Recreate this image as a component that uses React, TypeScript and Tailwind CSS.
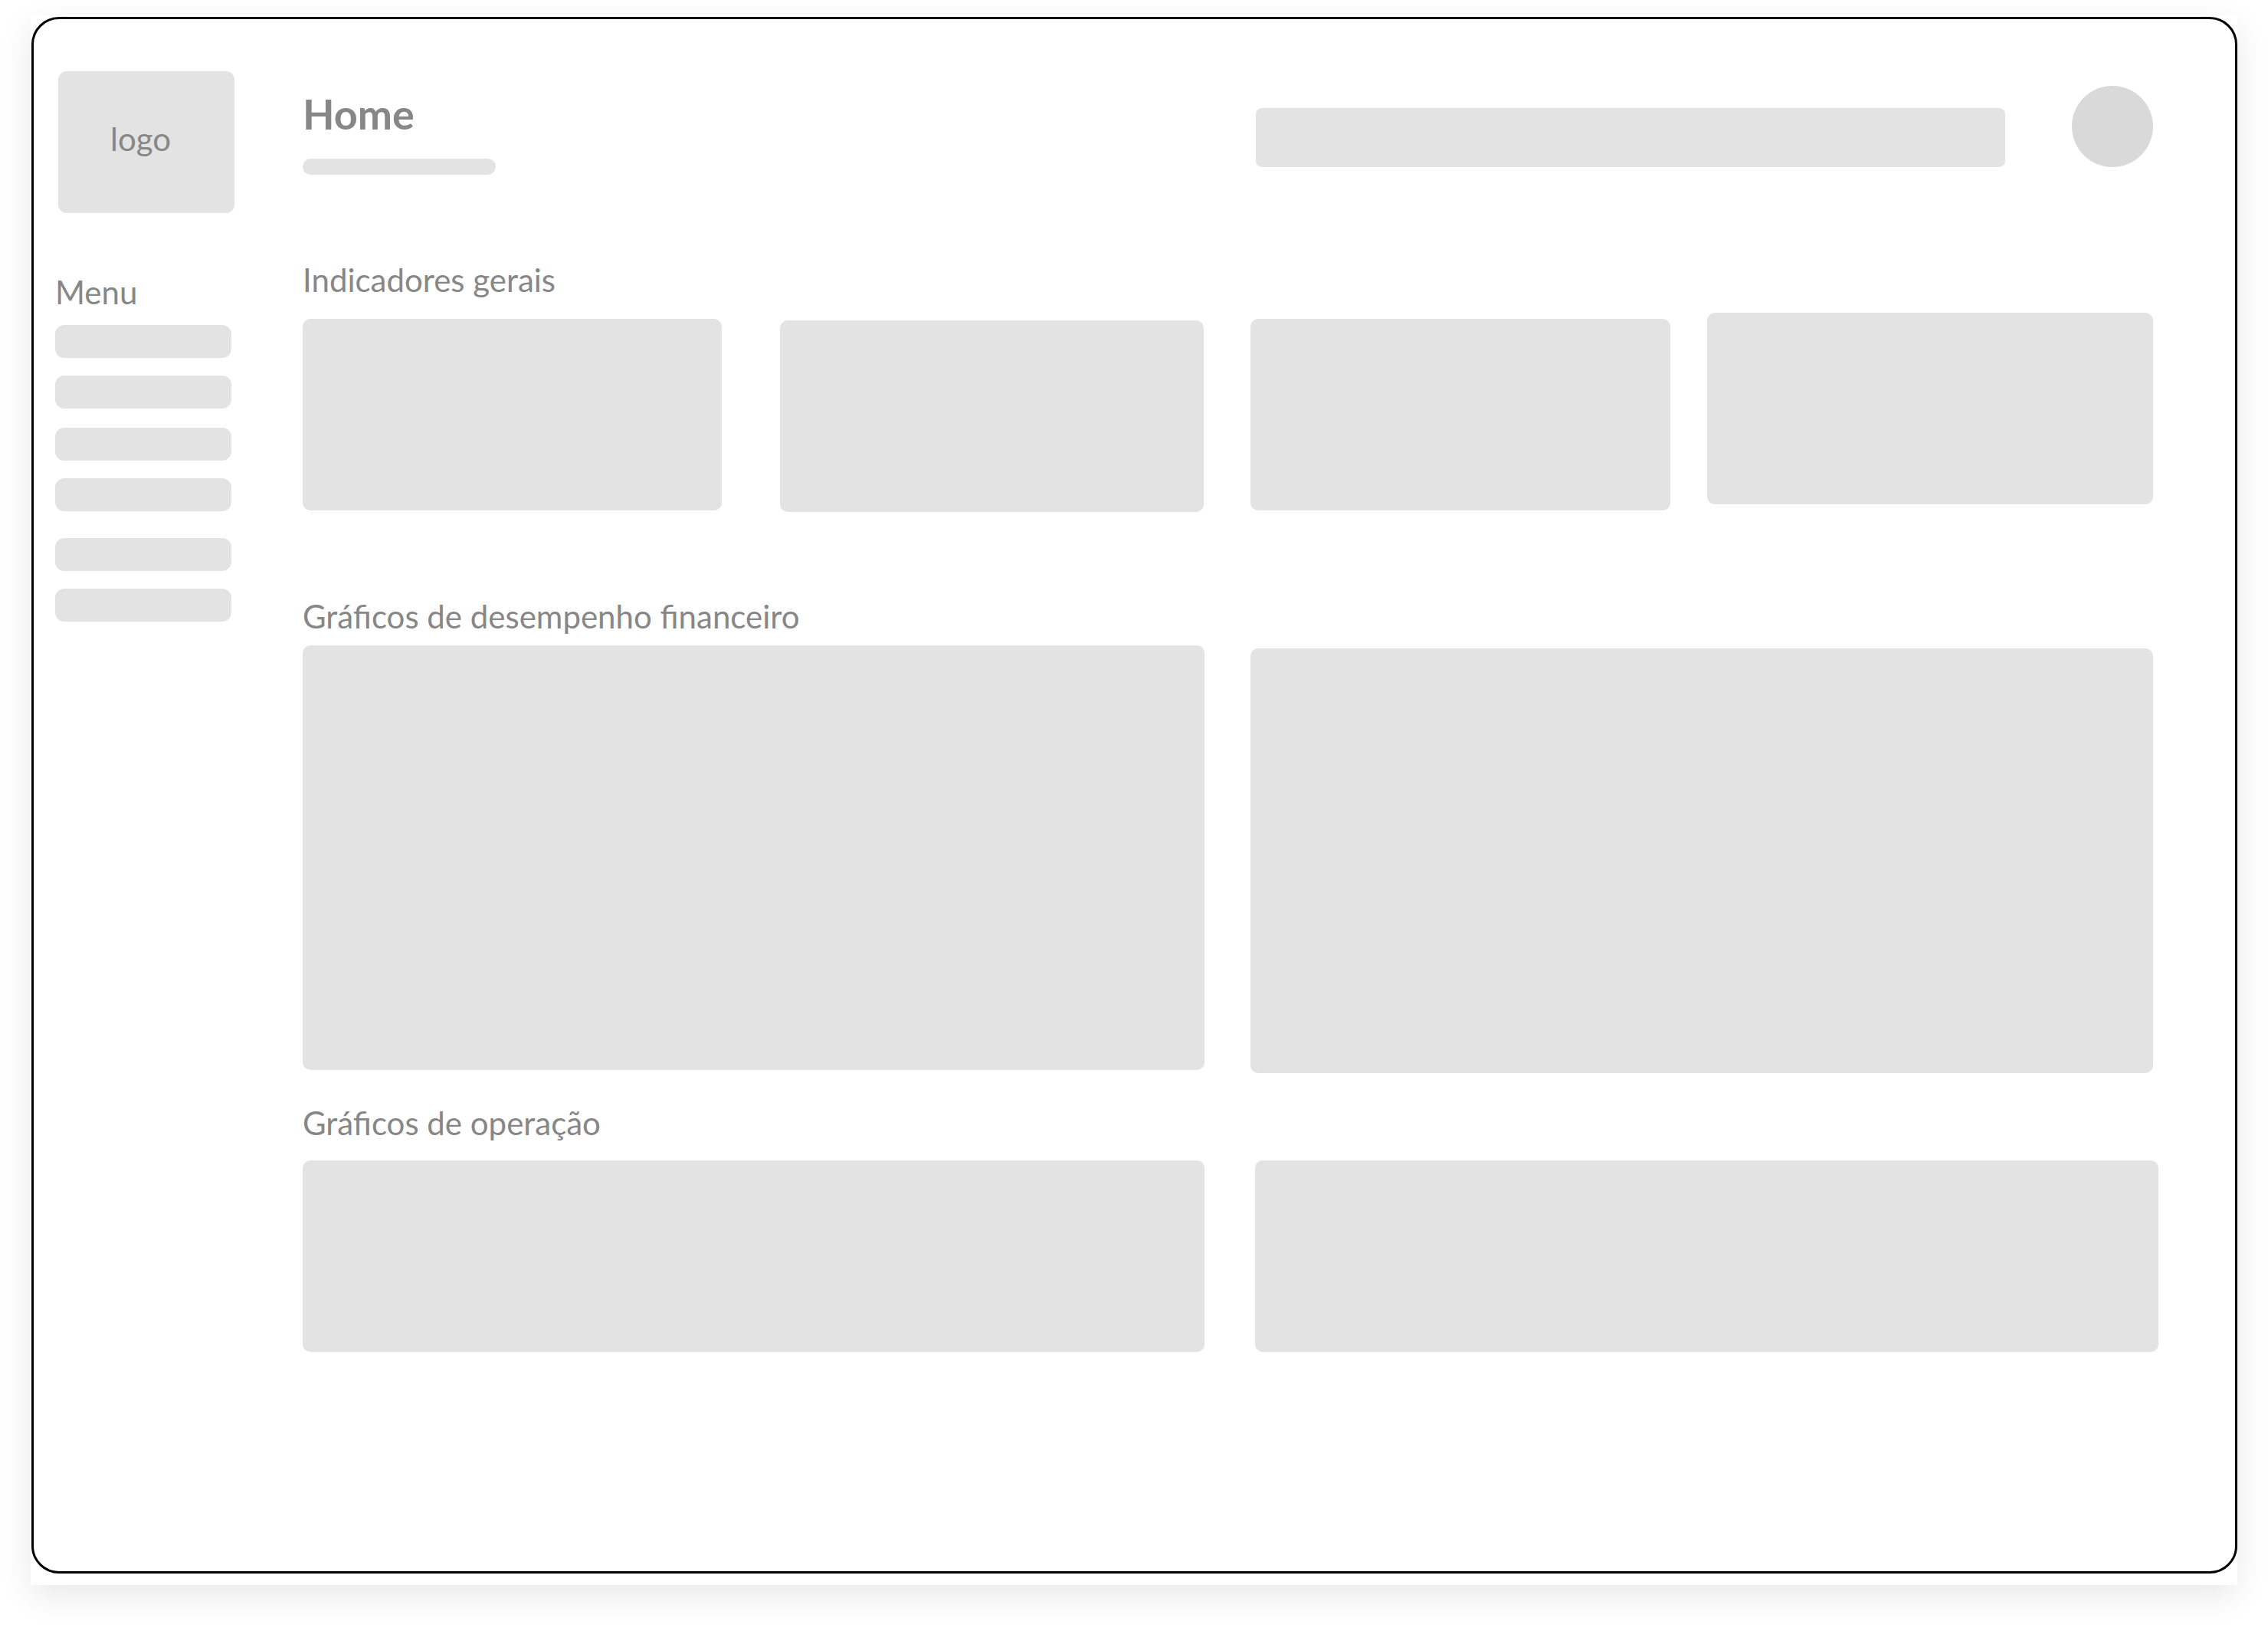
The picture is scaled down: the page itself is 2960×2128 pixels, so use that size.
import React from 'react'

// Wireframe dashboard: sidebar with logo + menu, main area with header and grey placeholder blocks

const box = 'bg-[#e3e3e3] rounded-[10px] shrink-0'

const menuItems = ['mt-[18px]', 'mt-[23px]', 'mt-[25px]', 'mt-[23px]', 'mt-[35px]', 'mt-[23px]']

const Sidebar = () => (
  <aside className="w-[351px] shrink-0 pl-[28px] pt-[68px] flex flex-col">
    {/* Logo placeholder */}
    <div className="ml-[4px] w-[230px] h-[185px] bg-[#e3e3e3] rounded-[11px] flex items-center justify-center pb-[10px] pr-[15px]">
      <span className="text-[42px] leading-[50px] text-[#878787]">logo</span>
    </div>

    <div className="mt-[78px] text-[42px] leading-[50px] text-[#878787]">Menu</div>

    {menuItems.map((mt, i) => (
      <div key={i} className={`${mt} w-[230px] h-[43px] bg-[#e3e3e3] rounded-[12px]`} />
    ))}
  </aside>
)

const SectionLabel = ({ children, className }: { children: React.ReactNode; className: string }) => (
  <h2 className={`${className} text-[42px] leading-[50px] font-normal text-[#878787]`}>{children}</h2>
)

export default function App() {
  return (
    <div className="w-[2960px] h-[2128px] bg-white overflow-hidden pt-[20px] pl-[40px] font-['Lato',sans-serif]">
      <div className="w-[2880px] h-[2048px] bg-white shadow-[0_14px_40px_rgba(0,0,0,0.09)] pt-[2px] pl-[1px]">
        <div className="w-[2879px] h-[2031px] border-[3px] border-black rounded-[36px] flex">
          <Sidebar />

          <main className="w-[2415px] shrink-0 pt-[87px] flex flex-col">
            {/* Header */}
            <header className="flex items-start">
              <div className="w-[1244px] shrink-0 pt-[5px]">
                <h1 className="text-[54px] leading-[64px] font-bold text-[#878787]">Home</h1>
                <div className="mt-[26px] w-[252px] h-[21px] rounded-full bg-[#e3e3e3]" />
              </div>
              <div className="mt-[29px] w-[978px] h-[77px] rounded-[8px] bg-[#e3e3e3] shrink-0" />
              <div className="ml-[87px] w-[106px] h-[106px] rounded-full bg-[#d9d9d9] shrink-0" />
            </header>

            {/* Indicadores gerais */}
            <SectionLabel className="mt-[112px]">Indicadores gerais</SectionLabel>
            <div className="mt-[18px] flex items-start">
              <div className={`${box} mt-[8px] w-[547px] h-[250px]`} />
              <div className={`${box} mt-[10px] ml-[76px] w-[553px] h-[250px]`} />
              <div className={`${box} mt-[8px] ml-[61px] w-[548px] h-[250px]`} />
              <div className={`${box} ml-[48px] w-[582px] h-[250px]`} />
            </div>

            {/* Gráficos financeiros */}
            <SectionLabel className="mt-[111px]">Gráficos de desempenho financeiro</SectionLabel>
            <div className="mt-[13px] flex items-start">
              <div className={`${box} w-[1177px] h-[554px]`} />
              <div className={`${box} mt-[4px] ml-[60px] w-[1178px] h-[554px]`} />
            </div>

            {/* Gráficos de operação */}
            <SectionLabel className="mt-[40px]">Gráficos de operação</SectionLabel>
            <div className="mt-[24px] flex items-start">
              <div className={`${box} w-[1177px] h-[250px]`} />
              <div className={`${box} ml-[66px] w-[1179px] h-[250px]`} />
            </div>
          </main>
        </div>
      </div>
    </div>
  )
}
